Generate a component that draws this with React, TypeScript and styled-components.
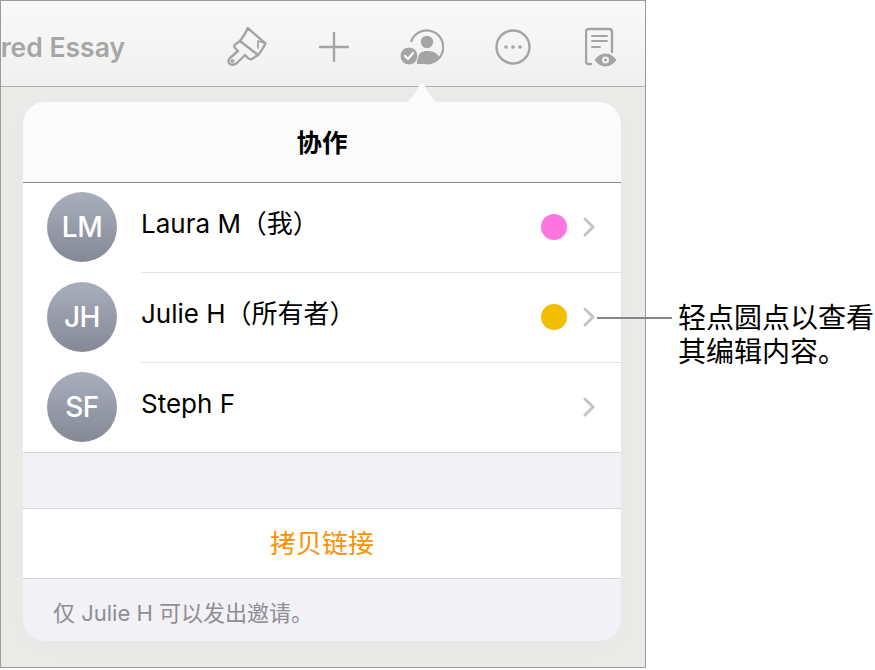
import React from 'react'
import styled, { createGlobalStyle } from 'styled-components'

const GlobalStyle = createGlobalStyle`
  html, body {
    margin: 0;
    padding: 0;
    background: #fff;
  }
  * {
    box-sizing: border-box;
  }
  body {
    font-family: Inter, 'Noto Sans CJK SC', sans-serif;
    -webkit-font-smoothing: antialiased;
  }
`

const Page = styled.div`
  position: relative;
  width: 875px;
  height: 670px;
  overflow: hidden;
`
const Device = styled.div`
  width: 646px;
  height: 668px;
  border: 1px solid #9b9b9b;
  background: #eaeae9;
`
const Toolbar = styled.div`
  height: 86px;
  display: flex;
  align-items: center;
  border-bottom: 1px solid #b0b0b0;
  background: linear-gradient(#f9f9f9, #f0f0ef);
`
const DocTitle = styled.div`
  width: 124px;
  margin-top: 6px;
  display: flex;
  justify-content: flex-end;
  overflow: hidden;
  white-space: nowrap;
  font-size: 26.5px;
  font-weight: 600;
  color: #a6a6a6;
`
const Tools = styled.div`
  display: flex;
  align-items: center;
  margin-top: 6px;
  margin-left: 102px;
`
const ToolIcon = styled.svg<{ $gap: number; $stroke?: number }>`
  display: block;
  margin-right: ${p => p.$gap}px;
  fill: none;
  stroke: #a4a4a4;
  stroke-width: ${p => p.$stroke ?? 2.4};
  stroke-linecap: round;
  stroke-linejoin: round;
`
const Body = styled.div`
  padding: 15px 0 0 22px;
`
const Popover = styled.div`
  position: relative;
  width: 598px;
  height: 539px;
  display: flex;
  flex-direction: column;
  border-radius: 22px;
  background: #f1f1f6;
  box-shadow: 0 6px 30px rgba(0, 0, 0, 0.015);
`
const Arrow = styled.svg`
  position: absolute;
  left: 375px;
  top: -22px;
  fill: #fbfbfb;
`
const Header = styled.div`
  height: 81px;
  display: flex;
  align-items: center;
  justify-content: center;
  padding-bottom: 4px;
  border-radius: 22px 22px 0 0;
  border-bottom: 1px solid #8b8b8b;
  background: #fbfbfb;
  font-size: 25.5px;
  font-weight: 700;
  color: #000;
`
const Row = styled.div<{ $last?: boolean }>`
  height: 90px;
  display: flex;
  align-items: center;
  padding-left: 24px;
  gap: 24px;
  background: #fff;
  border-bottom: ${p => (p.$last ? '1px solid #d6d6d9' : 'none')};
`
const Avatar = styled.div`
  flex: none;
  width: 70px;
  height: 70px;
  margin-bottom: 2px;
  display: flex;
  align-items: center;
  justify-content: center;
  border-radius: 50%;
  background: linear-gradient(#a9aebc, #858997);
  font-family: Inter, sans-serif;
  font-size: 28px;
  font-weight: 500;
  letter-spacing: -0.5px;
  color: #fff;
`
const RowBody = styled.div<{ $last?: boolean }>`
  flex: 1;
  height: 100%;
  display: flex;
  align-items: center;
  padding-right: 26px;
  border-bottom: ${p => (p.$last ? 'none' : '1px solid #e2e2e4')};
`
const Name = styled.div`
  flex: 1;
  margin-bottom: 8px;
  font-size: 26px;
  line-height: 32px;
  color: #000;
`
const Dot = styled.div<{ $color: string }>`
  width: 26px;
  height: 26px;
  margin-right: 16px;
  margin-bottom: 1px;
  border-radius: 50%;
  background: ${p => p.$color};
`
const Chevron = styled.svg`
  display: block;
  margin-bottom: 1px;
  fill: none;
  stroke: #c5c5c8;
  stroke-width: 3;
  stroke-linecap: round;
  stroke-linejoin: round;
`
const Spacer = styled.div`
  height: 55px;
`
const CopyLink = styled.div`
  height: 71px;
  display: flex;
  align-items: center;
  justify-content: center;
  padding-bottom: 4px;
  border-top: 1px solid #d6d6d9;
  border-bottom: 1px solid #d6d6d9;
  background: #fff;
  font-size: 26px;
  color: #ff9000;
`
const Footer = styled.div`
  flex: 1;
  display: flex;
  align-items: center;
  padding-left: 30px;
  padding-top: 2px;
  font-size: 22px;
  color: #8e8e93;
`
const Leader = styled.div`
  position: absolute;
  left: 597px;
  top: 317px;
  width: 75px;
  height: 2px;
  background: #868686;
`
const Callout = styled.div`
  position: absolute;
  left: 678px;
  top: 299px;
  width: 197px;
  font-family: 'Noto Sans CJK SC', sans-serif;
  font-size: 28px;
  line-height: 34px;
  color: #000;
`

const people = [
  { initials: 'LM', name: 'Laura M（我）', color: '#ff75e0' },
  { initials: 'JH', name: 'Julie H（所有者）', color: '#f2be00' },
  { initials: 'SF', name: 'Steph F' },
]

const App: React.FC = () => (
  <Page>
    <GlobalStyle />
    <Device>
      <Toolbar>
        <DocTitle>Shared Essay</DocTitle>
        <Tools>
          <ToolIcon $gap={52} width="40" height="42" viewBox="0 0 40 42">
            <path d="M20.7 2 L38.5 17.5 C36 22 34 26 31 29 L25 33 Q23 34 21 32 L18 29 L10 37 Q6 40 3 38 Q0 35 3 32 L11 25 L8 22 Q6.5 20 8 18.5 L13 15 C16 11 19 7 20.7 2 Z" />
            <path d="M13 15 L31 29" />
            <path d="M38.5 17.5 L31 15 L31 22" strokeWidth="1.8" />
            <circle cx="5.5" cy="35" r="0.8" />
          </ToolIcon>
          <ToolIcon $gap={51} width="30" height="30" viewBox="0 0 30 30">
            <path d="M1 15 H29 M15 1 V29" />
          </ToolIcon>
          <ToolIcon $gap={51} $stroke={2.2} width="44" height="40" viewBox="0 0 44 40">
            <path d="M11.4 14 A16.5 16.5 0 1 1 27 36.5" />
            <circle cx="27" cy="15" r="6.2" fill="#a4a4a4" stroke="none" />
            <path d="M17 33 C18 26 22 24 27 24 C33 24 37 26 39 30 C35 34 31 37 27 37 L17 37 Z" fill="#a4a4a4" stroke="none" />
            <circle cx="9" cy="29" r="9" fill="#a4a4a4" stroke="#f3f3f3" strokeWidth="1" />
            <path d="M5 29 L8 32 L13 26" stroke="#fff" />
          </ToolIcon>
          <ToolIcon $gap={54} width="36" height="36" viewBox="0 0 36 36">
            <circle cx="18" cy="18" r="16.5" />
            <circle cx="11" cy="18" r="1.8" fill="#a4a4a4" stroke="none" />
            <circle cx="18" cy="18" r="1.8" fill="#a4a4a4" stroke="none" />
            <circle cx="25" cy="18" r="1.8" fill="#a4a4a4" stroke="none" />
          </ToolIcon>
          <ToolIcon $gap={0} width="34" height="40" viewBox="0 0 34 40">
            <path d="M6 37 H4 Q1 37 1 34 V5 Q1 2 4 2 H24 Q27 2 27 5 V25" />
            <path d="M7 9 H22 M7 14 H22 M7 20 H15" strokeWidth="2" />
            <path d="M9 33 Q14 26 20.5 26 Q27 26 32 33 Q27 40 20.5 40 Q14 40 9 33 Z" fill="#a4a4a4" stroke="#f3f3f3" strokeWidth="1" />
            <circle cx="20.5" cy="33" r="3.5" fill="#f3f3f3" stroke="none" />
            <circle cx="20.5" cy="33" r="1.5" fill="#a4a4a4" stroke="none" />
          </ToolIcon>
        </Tools>
      </Toolbar>
      <Body>
        <Popover>
          <Arrow width="46" height="23" viewBox="0 0 46 23">
            <path d="M0 23 C10 23 13 19 17 13 L21 6 Q24 1 27 6 L31 13 C35 19 38 23 46 23 Z" />
          </Arrow>
          <Header>协作</Header>
          {people.map((person, i) => {
            const last = i === people.length - 1
            return (
              <Row key={person.initials} $last={last}>
                <Avatar>{person.initials}</Avatar>
                <RowBody $last={last}>
                  <Name>{person.name}</Name>
                  {person.color && <Dot $color={person.color} />}
                  <Chevron width="12" height="20" viewBox="0 0 12 20">
                    <path d="M2 2 L10 10 L2 18" />
                  </Chevron>
                </RowBody>
              </Row>
            )
          })}
          <Spacer />
          <CopyLink>拷贝链接</CopyLink>
          <Footer>仅 Julie H 可以发出邀请。</Footer>
        </Popover>
      </Body>
    </Device>
    <Leader />
    <Callout>轻点圆点以查看其编辑内容。</Callout>
  </Page>
)

export default App
